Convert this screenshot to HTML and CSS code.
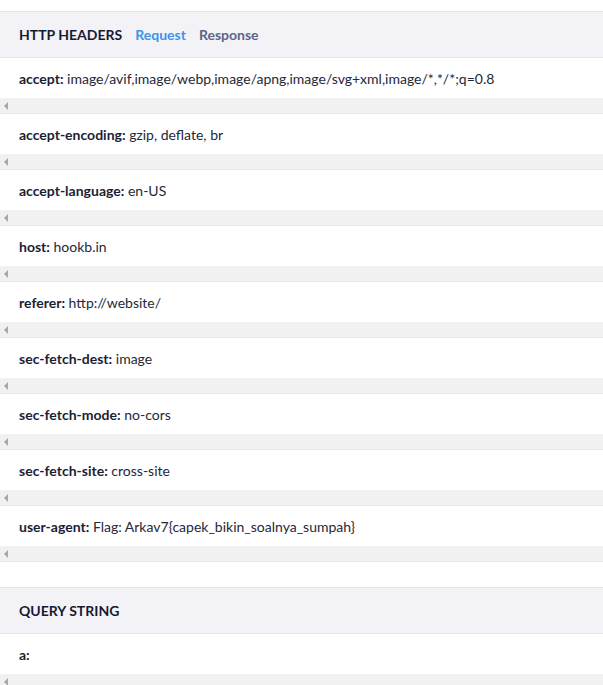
FILE: index.html
```html
<!DOCTYPE html>
<html>
<head>
<meta charset="utf-8">
<link rel="stylesheet" href="styles.css">
</head>
<body>
<div class="page">
  <section class="panel">
    <div class="panel-head">
      <h2 class="panel-title">HTTP HEADERS</h2>
      <span class="tab tab-active">Request</span>
      <span class="tab">Response</span>
    </div>
    <div class="row"><div class="row-content"><b>accept:</b> image/avif,image/webp,image/apng,image/svg+xml,image/*,*/*;q=0.8</div><div class="hscroll"><span class="arrow"></span></div></div>
    <div class="row"><div class="row-content"><b>accept-encoding:</b> gzip, deflate, br</div><div class="hscroll"><span class="arrow"></span></div></div>
    <div class="row"><div class="row-content"><b>accept-language:</b> en-US</div><div class="hscroll"><span class="arrow"></span></div></div>
    <div class="row"><div class="row-content"><b>host:</b> hookb.in</div><div class="hscroll"><span class="arrow"></span></div></div>
    <div class="row"><div class="row-content"><b>referer:</b> http://website/</div><div class="hscroll"><span class="arrow"></span></div></div>
    <div class="row"><div class="row-content"><b>sec-fetch-dest:</b> image</div><div class="hscroll"><span class="arrow"></span></div></div>
    <div class="row"><div class="row-content"><b>sec-fetch-mode:</b> no-cors</div><div class="hscroll"><span class="arrow"></span></div></div>
    <div class="row"><div class="row-content"><b>sec-fetch-site:</b> cross-site</div><div class="hscroll"><span class="arrow"></span></div></div>
    <div class="row"><div class="row-content"><b>user-agent:</b> Flag: Arkav7{capek_bikin_soalnya_sumpah}</div><div class="hscroll"><span class="arrow"></span></div></div>
  </section>
  <section class="panel panel-query">
    <div class="panel-head">
      <h2 class="panel-title">QUERY STRING</h2>
    </div>
    <div class="row"><div class="row-content"><b>a:</b></div><div class="hscroll"><span class="arrow"></span></div></div>
  </section>
</div>
</body>
</html>
```
FILE: styles.css
```css
html, body {
  margin: 0;
  padding: 0;
  background: #ffffff;
}
body {
  font-family: Lato, "Open Sans", sans-serif;
  color: #252839;
  overflow: hidden;
}
.page {
  padding-top: 11px;
}
.panel-query {
  margin-top: 25px;
}
.panel-head {
  display: flex;
  align-items: center;
  gap: 13px;
  box-sizing: border-box;
  height: 47px;
  padding: 0 19px;
  background: #f3f3f7;
  border-top: 1px solid #e2e2ea;
  border-bottom: 1px solid #e2e2ea;
}
.panel-title {
  margin: 0;
  font-size: 14px;
  font-weight: 700;
  color: #161a33;
}
.tab {
  font-size: 14px;
  font-weight: 700;
  color: #5b6585;
}
.tab-active {
  color: #3d93e8;
}
.row {
  border-bottom: 1px solid #e6e6ec;
}
.row-content {
  height: 40px;
  line-height: 42px;
  padding: 0 19px;
  font-size: 14px;
  white-space: nowrap;
  overflow: hidden;
}
.row-content b {
  font-weight: 700;
  color: #1b1e33;
}
.hscroll {
  height: 15px;
  background: #f1f1f1;
  display: flex;
  align-items: center;
  padding-left: 4px;
}
.arrow {
  width: 0;
  height: 0;
  border-top: 4px solid transparent;
  border-bottom: 4px solid transparent;
  border-right: 4px solid #a8a8a8;
}
```
